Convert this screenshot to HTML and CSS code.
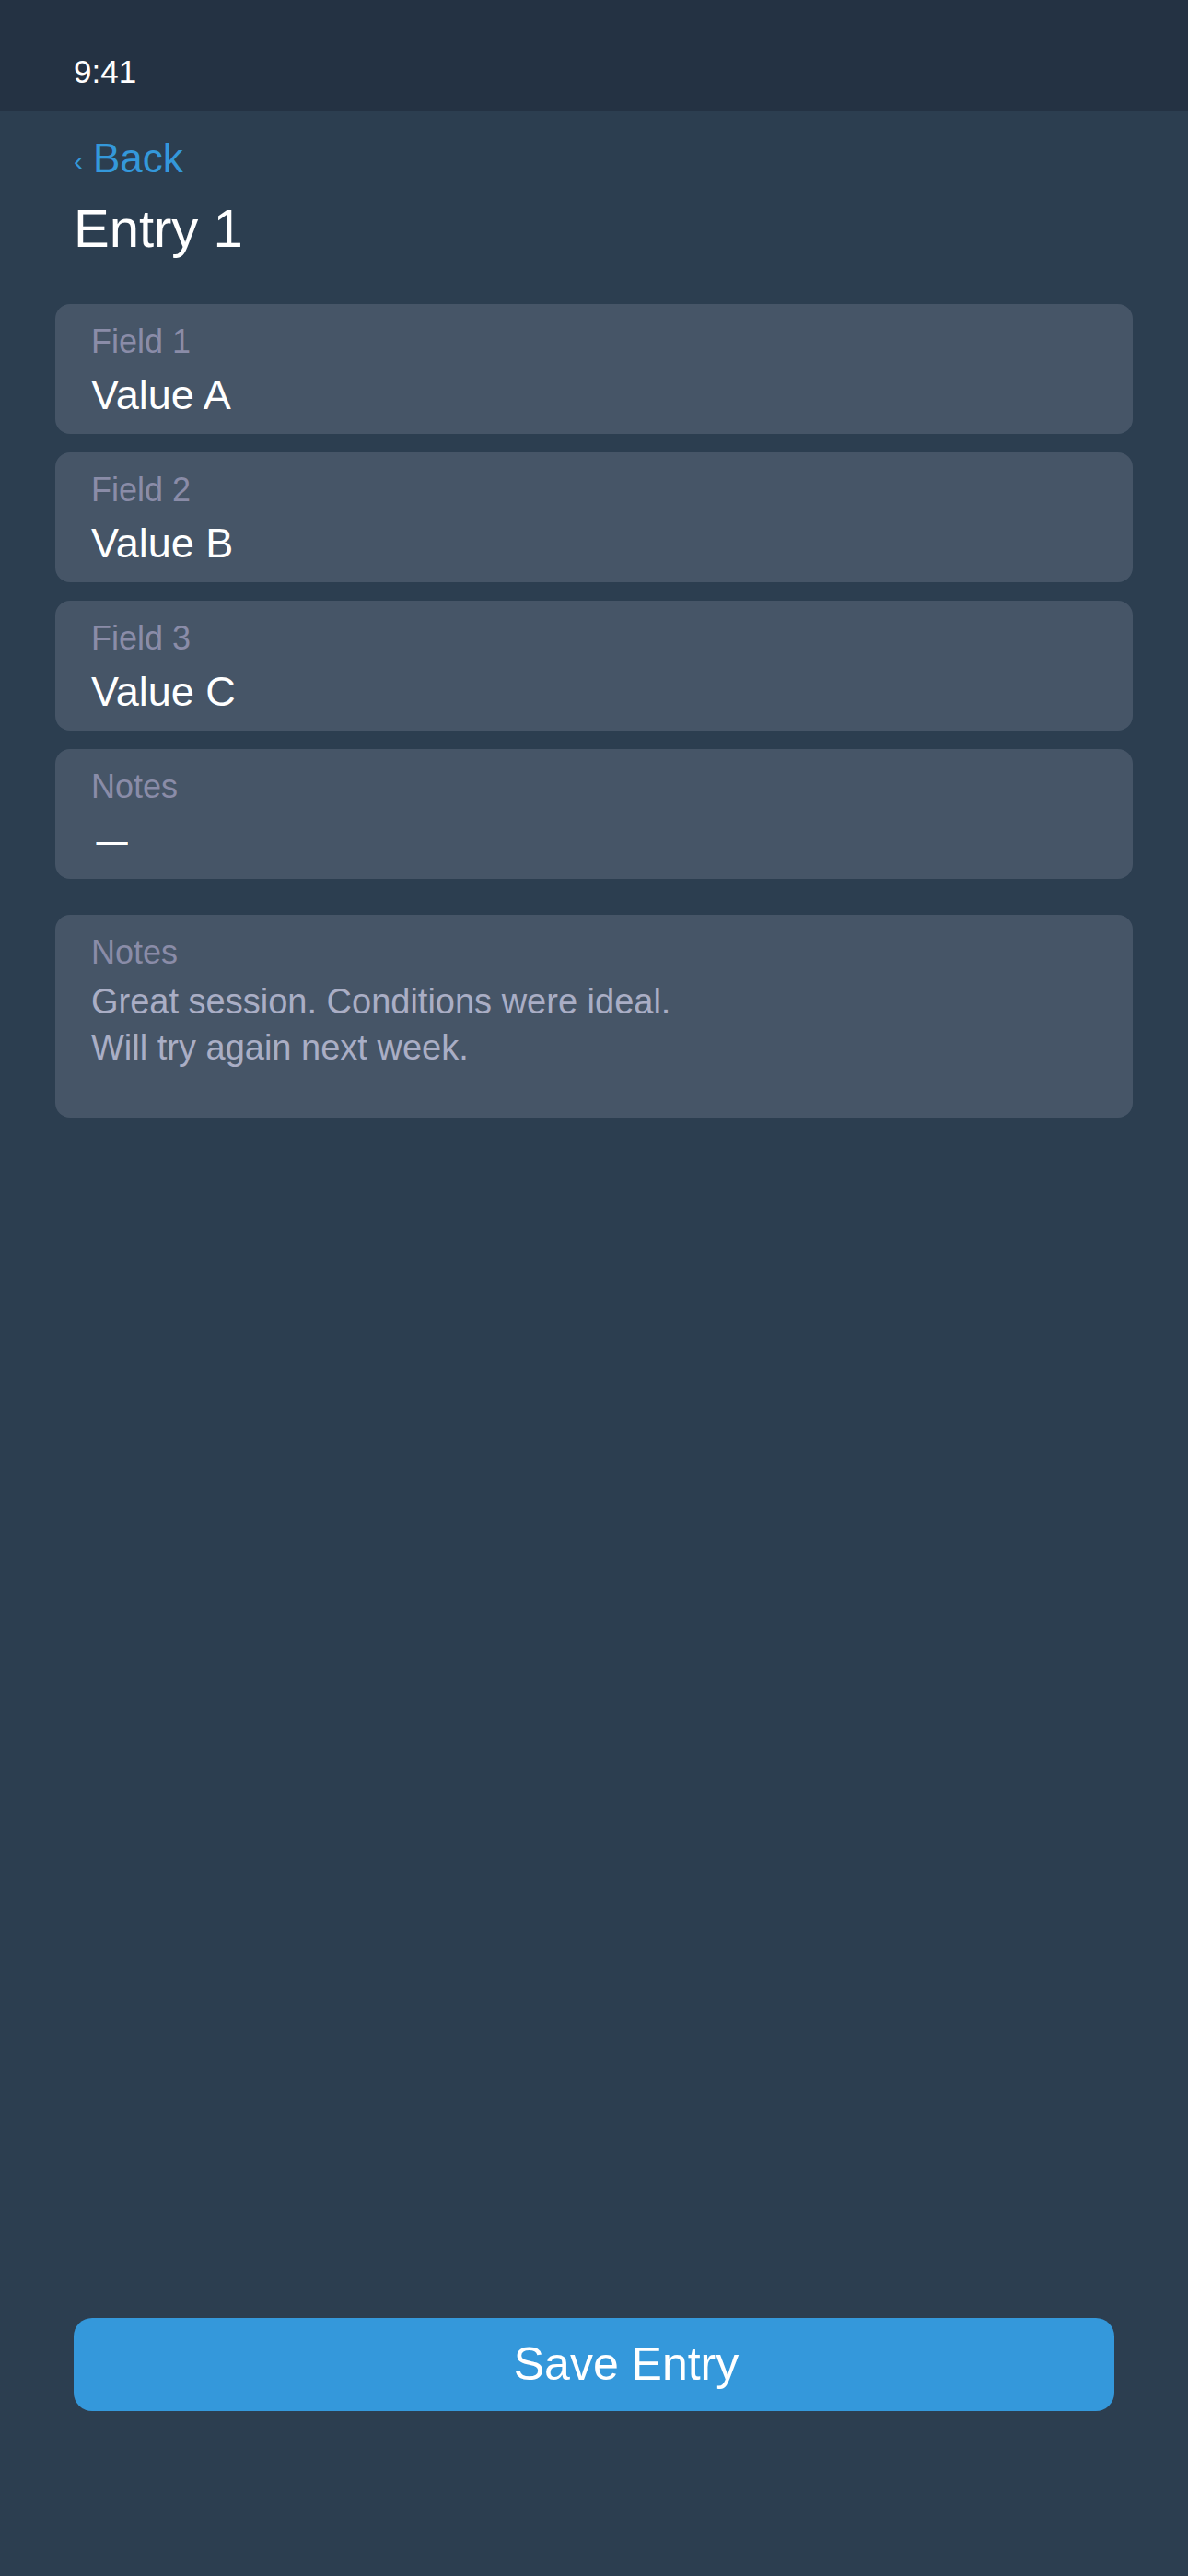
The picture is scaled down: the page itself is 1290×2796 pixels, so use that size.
FILE: index.html
```html
<!DOCTYPE html>
<html lang="en">
<head>
<meta charset="utf-8">
<title>Entry 1</title>
<link rel="stylesheet" href="styles.css">
</head>
<body>
<div class="screen">
  <div class="status-bar"><span class="time">9:41</span></div>
  <header class="nav">
    <a class="back" href="#"><span class="chev">‹</span>Back</a>
    <h1 class="title">Entry 1</h1>
  </header>
  <main class="fields">
    <div class="card">
      <div class="label">Field 1</div>
      <div class="value">Value A</div>
    </div>
    <div class="card">
      <div class="label">Field 2</div>
      <div class="value">Value B</div>
    </div>
    <div class="card">
      <div class="label">Field 3</div>
      <div class="value">Value C</div>
    </div>
    <div class="card">
      <div class="label">Notes</div>
      <div class="value"><span class="dash">—</span></div>
    </div>
    <div class="card notes-card">
      <div class="label">Notes</div>
      <div class="notes-text">Great session. Conditions were ideal.<br>Will try again next week.</div>
    </div>
  </main>
  <footer class="actions">
    <button class="save-btn" type="button">Save Entry</button>
  </footer>
</div>
</body>
</html>
```

FILE: styles.css
```css
* { box-sizing: border-box; }
html, body {
  margin: 0;
  padding: 0;
  background: #2c3e50;
}
body {
  font-family: "Liberation Sans", Arial, Helvetica, sans-serif;
  color: #ffffff;
}
.screen {
  min-height: 2796px;
  display: flex;
  flex-direction: column;
  background: #2c3e50;
}
.status-bar {
  height: 121px;
  background: #243243;
  padding: 58px 0 0 80px;
}
.time {
  display: block;
  font-size: 35px;
  line-height: 40px;
  color: #ffffff;
}
.nav {
  padding: 25px 80px 0 80px;
  display: flex;
  flex-direction: column;
  gap: 16px;
}
.back {
  height: 52px;
  font-size: 44px;
  line-height: 52px;
  color: #3498db;
  text-decoration: none;
  display: flex;
  align-items: baseline;
}
.chev {
  font-size: 30px;
  line-height: 30px;
  margin-right: 11px;
  position: relative;
  top: -2px;
}
.title {
  margin: 0;
  font-weight: 400;
  font-size: 58px;
  line-height: 68px;
  color: #ffffff;
}
.fields {
  padding: 48px 60px 0 60px;
  display: flex;
  flex-direction: column;
  gap: 20px;
}
.card {
  background: #465567;
  border-radius: 16px;
  padding: 21px 39px 16px 39px;
  display: flex;
  flex-direction: column;
}
.label {
  font-size: 36px;
  line-height: 40px;
  color: #8a8ca8;
}
.value {
  margin-top: 12px;
  font-size: 45px;
  line-height: 52px;
  color: #ffffff;
}
.dash {
  display: inline-block;
  transform: scaleX(0.76);
  transform-origin: center;
}
.notes-card {
  margin-top: 19px;
  padding-bottom: 51px;
}
.notes-text {
  margin-top: 8px;
  font-size: 38px;
  line-height: 50px;
  color: #aaaec5;
}
.actions {
  margin-top: auto;
  padding: 0 80px 179px 80px;
}
.save-btn {
  display: block;
  width: 100%;
  height: 101px;
  border: 0;
  border-radius: 20px;
  background: #3498db;
  color: #ffffff;
  font-family: "Liberation Sans", Arial, Helvetica, sans-serif;
  font-size: 50px;
  line-height: 101px;
  padding: 0 0 0 70px;
  cursor: pointer;
}
```
